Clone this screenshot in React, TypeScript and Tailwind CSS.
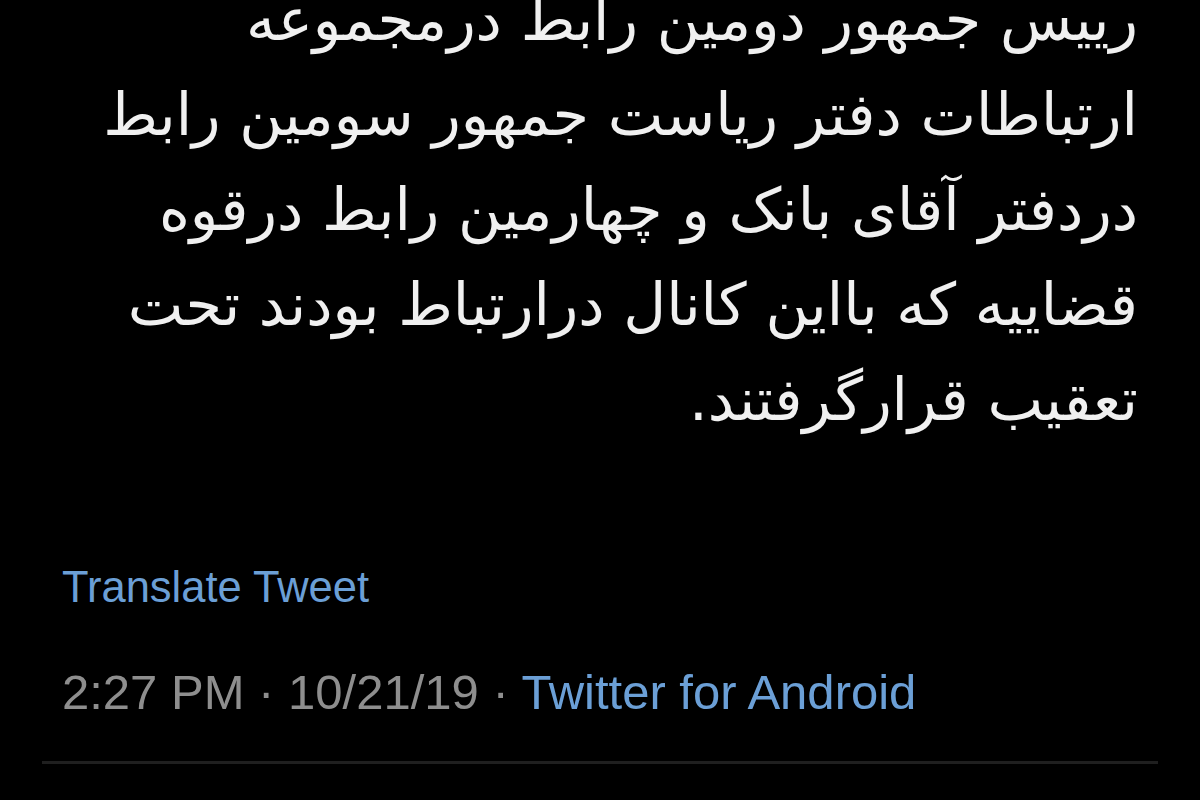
import React from 'react';

const lines = [
  'رییس جمهور دومین رابط درمجموعه',
  'ارتباطات دفتر ریاست جمهور سومین رابط',
  'دردفتر آقای بانک و چهارمین رابط درقوه',
  'قضاییه که بااین کانال درارتباط بودند تحت',
  'تعقیب قرارگرفتند.',
];

export default function App() {
  return (
    <div className="w-[1200px] h-[800px] bg-black overflow-hidden">
      {/* tweet body, first line runs off the top edge */}
      <div
        dir="rtl"
        className="-mt-[28px] pr-[62px] text-[59px] leading-[95px] text-[#f0f0f0]"
        style={{ fontFamily: '"DejaVu Sans", sans-serif' }}
      >
        {lines.map((l, i) => (
          <div key={i} className="whitespace-nowrap">{l}</div>
        ))}
      </div>

      <div className="px-[62px]" style={{ fontFamily: '"Liberation Sans", Arial, sans-serif' }}>
        <div className="mt-[116px] text-[43.5px] leading-[49px] text-[#6b9fd6]">Translate Tweet</div>
        <div className="mt-[52px] text-[49px] leading-[56px] text-[#8e8e8e] whitespace-nowrap">
          2:27 PM · 10/21/19 · <span className="text-[#6b9fd6]">Twitter for Android</span>
        </div>
      </div>

      <div className="mt-[41px] mx-[42px] h-[3px] bg-[#1f1f1f]" />
    </div>
  );
}
